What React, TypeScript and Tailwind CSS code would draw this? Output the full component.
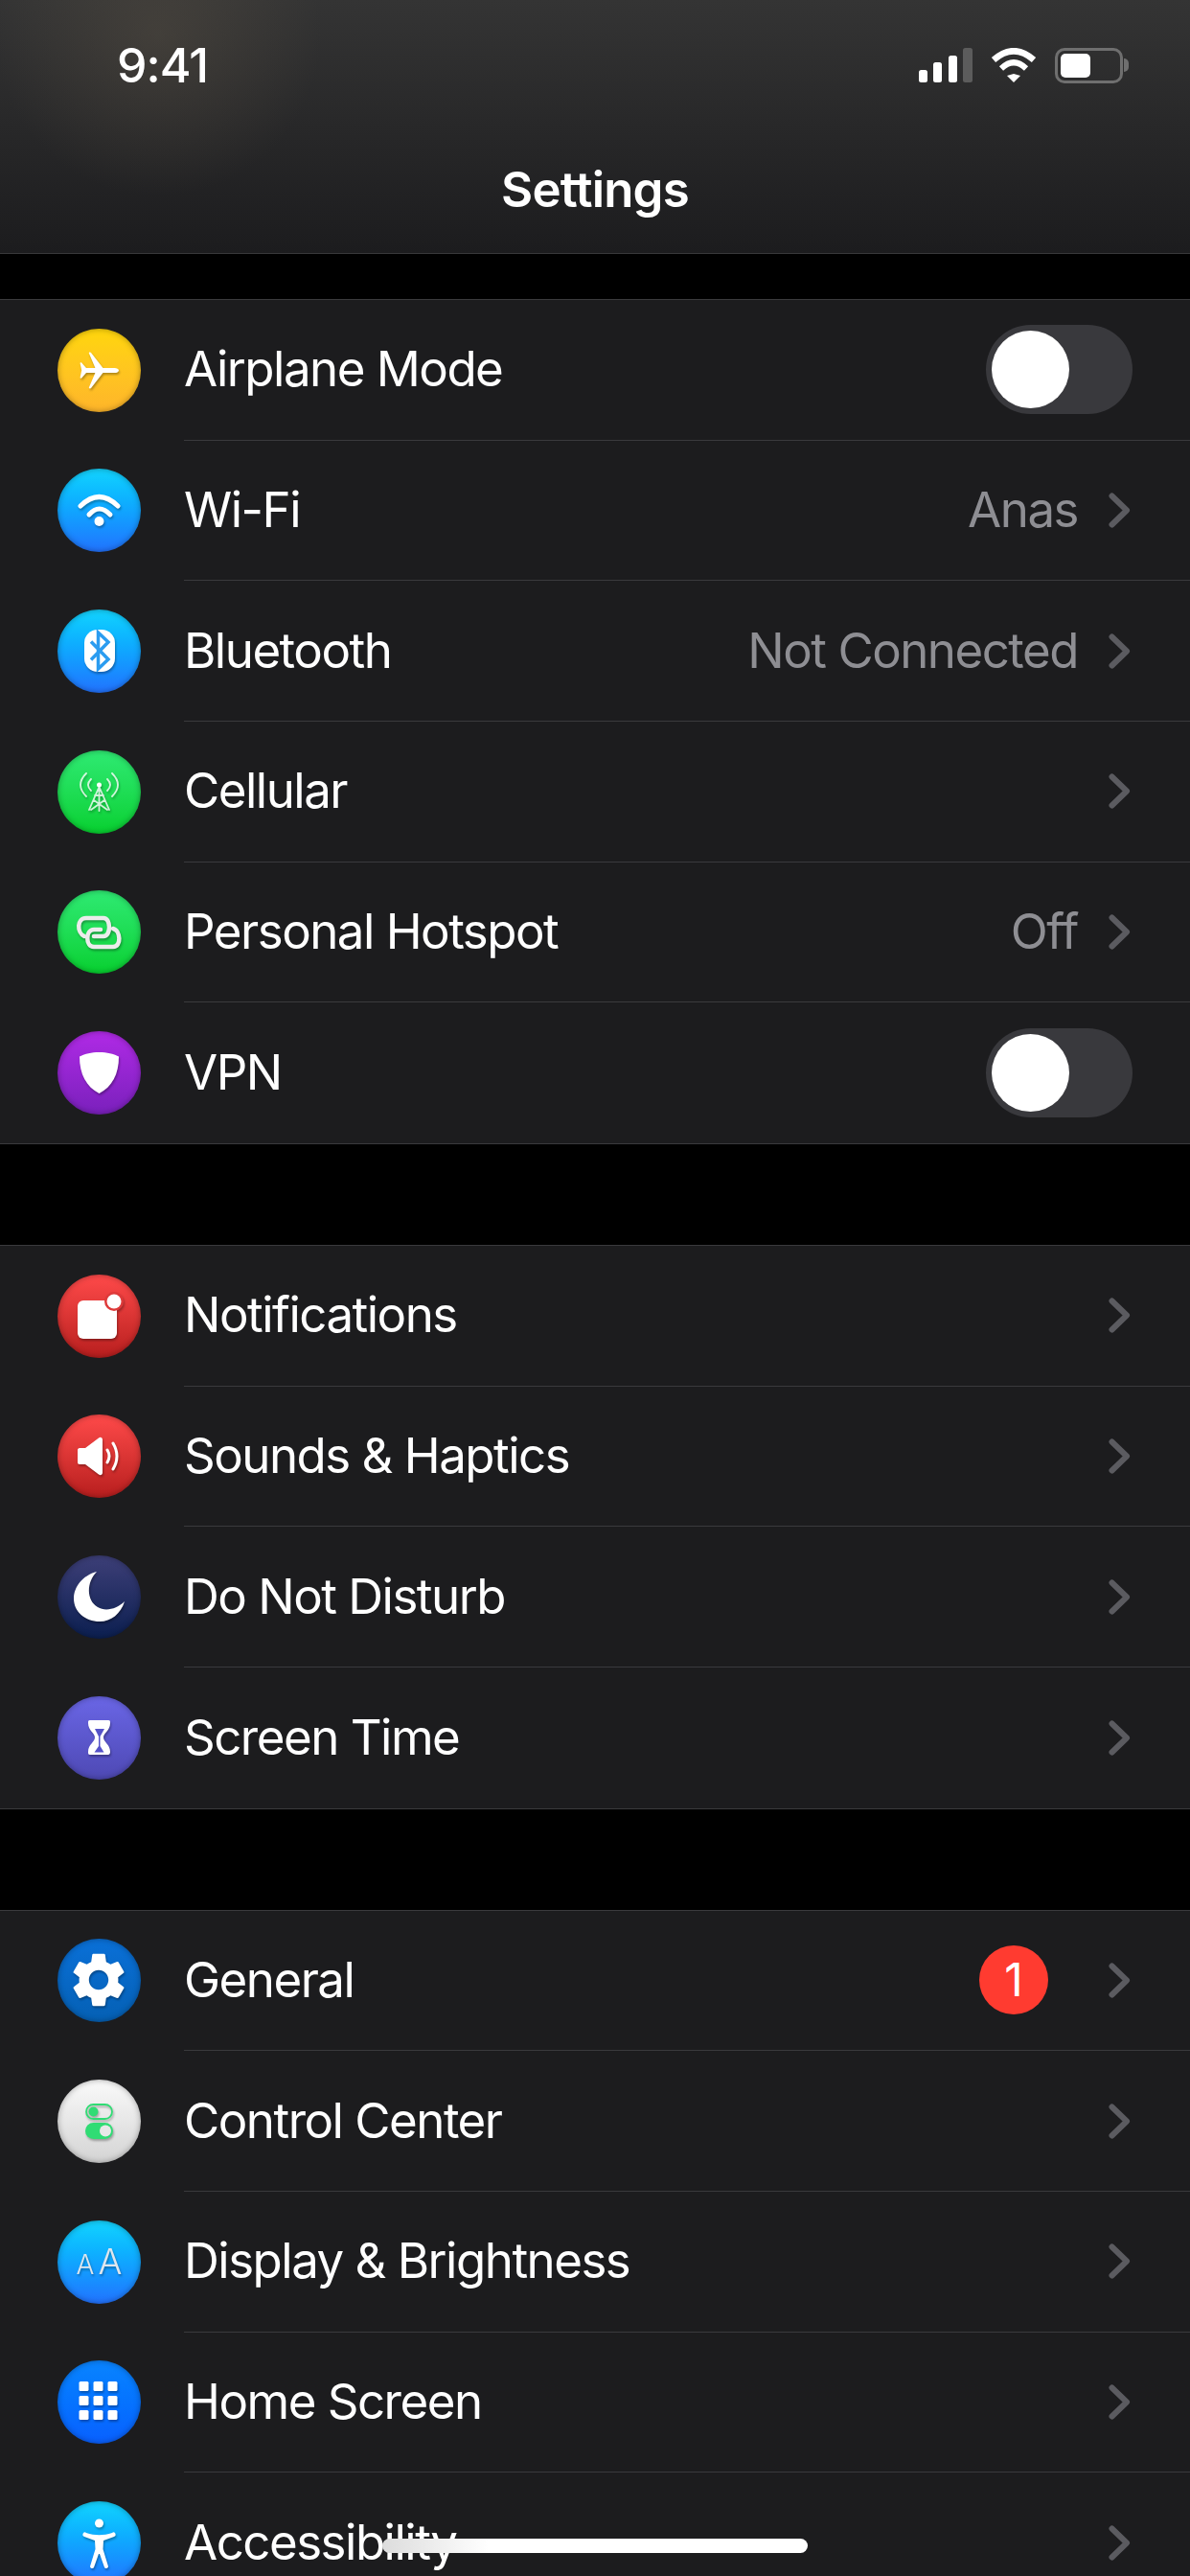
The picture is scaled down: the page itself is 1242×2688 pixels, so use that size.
import React from 'react';
import { MdSettings } from 'react-icons/md';

const glyph = 'drop-shadow-[1px_2px_1px_rgba(0,0,0,0.3)]';

function Svg({ children }: { children: React.ReactNode }) {
  return (
    <svg viewBox="0 0 87 87" className={`absolute inset-0 w-full h-full ${glyph}`}>
      {children}
    </svg>
  );
}

const AirplaneIcon = () => (
  <Svg>
    <path fill="#fff" d="M64 43.5c0-1.6-2.2-2.6-4.5-2.6H47.5L35.2 25.2c-.6-.8-2.6-.8-2.4.2l6.600 15.500H30l-4.600-5.200c-.6-.6-1.800-.6-1.800.2l1.600 7.600-1.600 7.600c0 .8 1.200.8 1.800.2l4.600-5.200h9.400l-6.600 15.500c-.2 1 1.800 1 2.400.2l12.300-15.700h12c2.300 0 4.500-1 4.500-2.600z" />
  </Svg>
);

const WifiIcon = () => (
  <Svg>
    <path fill="none" stroke="#fff" strokeWidth="5" strokeLinecap="round" d="M24 39Q43.5 20 63 39" />
    <path fill="none" stroke="#fff" strokeWidth="5" strokeLinecap="round" d="M33 48Q43.5 36 55 48" />
    <circle cx="43.5" cy="55" r="5" fill="#fff" />
  </Svg>
);

const BluetoothIcon = () => (
  <Svg>
    <rect x="28" y="21" width="32" height="44" rx="14" fill="#fff" />
    <path fill="none" stroke="#2a9cf0" strokeWidth="3.5" strokeLinejoin="miter" d="M35 33.500 53 52 42.500 62V24L53 34 35 52.500" />
  </Svg>
);

const CellularIcon = () => (
  <Svg>
    <g fill="none" stroke="#fff" strokeOpacity="0.8" strokeLinecap="round">
      <path strokeWidth="1.800" d="M30 24Q18 36 30 48" />
      <path strokeWidth="1.800" d="M57 24Q69 36 57 48" />
      <path strokeWidth="1.800" d="M35 30Q29 36 35 42" />
      <path strokeWidth="1.800" d="M52 30Q58 36 52 42" />
      <path strokeWidth="1.800" d="M43.500 38 33 62M43.500 38 54 62M43.500 38V63M38 52 52 62M49 52 35 62M39 47H48" />
    </g>
    <circle cx="43.500" cy="36" r="2.500" fill="#fff" />
  </Svg>
);

const HotspotIcon = () => (
  <Svg>
    <g fill="none" stroke="#ececec" strokeWidth="4.500" strokeLinecap="round">
      <path d="M28 48C20 44 20 29 30 29H48C56 29 56 48 48 48H38" />
      <path d="M58 40C66 42 67 59 58 59H38C29 59 29 41 38 41H45" />
    </g>
  </Svg>
);

const VpnIcon = () => (
  <Svg>
    <path fill="#fff" d="M43.500 22C52 22 58 23.500 64 26.500 64 45 57 58 43.500 65 30 58 23 45 23 26.500 29 23.500 35 22 43.500 22Z" />
  </Svg>
);

const NotificationsIcon = () => (
  <Svg>
    <rect x="21" y="27" width="41" height="40" rx="6" fill="#fff" />
    <circle cx="59" cy="28" r="10" fill="#de3a3a" />
    <circle cx="59" cy="28" r="7.500" fill="#fff" />
  </Svg>
);

const SoundsIcon = () => (
  <Svg>
    <path fill="#fff" d="M21 37c0-1 .8-2 2-2h6L43 24.500c1.800-1.500 4-.5 4 2v34c0 2.500-2.200 3.500-4 2L29 52h-6c-1.200 0-2-1-2-2z" />
    <g fill="none" stroke="#fff" strokeWidth="3" strokeLinecap="round">
      <path d="M52 37Q56 43.500 52 50" />
      <path d="M58 30Q66 43.500 58 57" />
    </g>
  </Svg>
);

const MoonIcon = () => (
  <Svg>
    <path fill="#fff" d="M41 17C26 21 17 33 17 45 17 59 29 69 44 69 56 69 66 61 70 48 62 56 50 59 42 54 30 47 30 28 41 17Z" />
  </Svg>
);

const HourglassIcon = () => (
  <Svg>
    <path fill="#fff" d="M34 25H53C55 25 55 26 55 28 55 36 48 38 48 43 48 48 55 50 55 58 55 60 54 61 53 61H34C32 61 32 60 32 58 32 50 39 48 39 43 39 38 32 36 32 28 32 26 32 25 34 25Z" />
    <path fill="#5552c8" d="M39 34H49L44.500 42V52L48.500 58.500H38.500L43 52V42Z" />
  </Svg>
);

const GeneralIcon = () => (
  <MdSettings className={`absolute top-[9px] left-[9px] text-white ${glyph}`} size={68} />
);

const ControlIcon = () => (
  <Svg>
    <rect x="30" y="26" width="27" height="15" rx="7.500" fill="none" stroke="#30dc74" strokeWidth="1.800" />
    <circle cx="37.500" cy="33.500" r="5" fill="#30dc74" />
    <rect x="29" y="45" width="29" height="17" rx="8.500" fill="#30dc74" />
    <circle cx="50" cy="53.500" r="6" fill="#e8e8e8" />
  </Svg>
);

const DisplayIcon = () => (
  <div className={`absolute inset-0 flex items-baseline justify-center pt-[24px] gap-[4px] font-light text-[#dfe6ee] ${glyph}`}>
    <span className="text-[28px] leading-[38px]">A</span>
    <span className="text-[37px] leading-[38px]">A</span>
  </div>
);

const HomeIcon = () => (
  <Svg>
    {[22, 37, 52].map((y) =>
      [22, 37, 52].map((x) => (
        <rect key={`${x}-${y}`} x={x + 0.5} y={y} width="10" height="10" rx="1.500" fill="#fff" />
      ))
    )}
  </Svg>
);

const AccessibilityIcon = () => (
  <Svg>
    <circle cx="43.500" cy="23" r="4.500" fill="#fff" />
    <path fill="#fff" d="M27 33C26 35 26 36 28 37L39 41 39.500 50 34 68C34 70 37 71 38 69L43 55 44 55 49 69C50 71 53 70 53 68L47.500 50 48 41 59 37C61 36 61 35 60 33 59 32 58 32 57 33 48 36 39 36 30 33 29 32 28 32 27 33Z" />
  </Svg>
);

const tones: Record<string, string> = {
  yellow: 'bg-gradient-to-b from-[#ffd60a] to-[#feb52a]',
  sky: 'bg-gradient-to-b from-[#14d4fe] to-[#2272fe]',
  green: 'bg-gradient-to-b from-[#2eea72] to-[#06d02e]',
  purple: 'bg-gradient-to-b from-[#b02ae6] to-[#7a20bc]',
  red: 'bg-gradient-to-b from-[#ff4a4a] to-[#b81e1e]',
  navy: 'bg-gradient-to-b from-[#3d3f78] to-[#0b1f50]',
  indigo: 'bg-gradient-to-b from-[#6a66e6] to-[#4e49b4]',
  steel: 'bg-gradient-to-b from-[#0a70d8] to-[#0560b4]',
  white: 'bg-gradient-to-b from-[#fafafa] to-[#d4d4d4]',
  azure: 'bg-gradient-to-b from-[#0a84ff] to-[#0a60ff]',
};

type Row = {
  label: string;
  tone: string;
  icon: React.ReactNode;
  value?: string;
  toggle?: boolean;
  badge?: string;
};

const groups: Row[][] = [
  [
    { label: 'Airplane Mode', tone: 'yellow', icon: <AirplaneIcon />, toggle: true },
    { label: 'Wi-Fi', tone: 'sky', icon: <WifiIcon />, value: 'Anas' },
    { label: 'Bluetooth', tone: 'sky', icon: <BluetoothIcon />, value: 'Not Connected' },
    { label: 'Cellular', tone: 'green', icon: <CellularIcon /> },
    { label: 'Personal Hotspot', tone: 'green', icon: <HotspotIcon />, value: 'Off' },
    { label: 'VPN', tone: 'purple', icon: <VpnIcon />, toggle: true },
  ],
  [
    { label: 'Notifications', tone: 'red', icon: <NotificationsIcon /> },
    { label: 'Sounds & Haptics', tone: 'red', icon: <SoundsIcon /> },
    { label: 'Do Not Disturb', tone: 'navy', icon: <MoonIcon /> },
    { label: 'Screen Time', tone: 'indigo', icon: <HourglassIcon /> },
  ],
  [
    { label: 'General', tone: 'steel', icon: <GeneralIcon />, badge: '1' },
    { label: 'Control Center', tone: 'white', icon: <ControlIcon /> },
    { label: 'Display & Brightness', tone: 'sky', icon: <DisplayIcon /> },
    { label: 'Home Screen', tone: 'azure', icon: <HomeIcon /> },
    { label: 'Accessibility', tone: 'sky', icon: <AccessibilityIcon /> },
  ],
];

function Chevron() {
  return (
    <svg viewBox="0 0 23 37" className="w-[23px] h-[37px] shrink-0">
      <path d="M3.500 3.500 19 18.500 3.500 33.500" fill="none" stroke="#5b5b60" strokeWidth="6" strokeLinecap="round" strokeLinejoin="round" />
    </svg>
  );
}

function Toggle() {
  return (
    <div className="w-[153px] h-[93px] rounded-full bg-[#39393d] p-[6px] mr-[-2px]">
      <div className="w-[81px] h-[81px] rounded-full bg-white" />
    </div>
  );
}

function SettingsRow({ row, last }: { row: Row; last: boolean }) {
  return (
    <div className="flex items-center h-[146.67px] pl-[60px]">
      <div className={`relative w-[87px] h-[87px] rounded-full shrink-0 shadow-[inset_0_0_6px_rgba(0,0,0,0.35)] ${tones[row.tone]}`}>
        {row.icon}
      </div>
      <div className={`flex items-center flex-1 h-full ml-[45px] pr-[62px] ${last ? '' : 'border-b border-[#3a3a3d]'}`}>
        <span className="flex-1 pb-[2px] text-[51px] leading-none tracking-[-1.5px] text-white whitespace-nowrap">{row.label}</span>
        {row.value && <span className="pb-[2px] text-[51px] leading-none tracking-[-1.5px] text-[#8e8e93] mr-[32px]">{row.value}</span>}
        {row.badge && (
          <span className="w-[72px] h-[72px] rounded-full bg-[#ff3b30] text-white text-[48px] leading-none flex items-center justify-center mr-[63px]">
            {row.badge}
          </span>
        )}
        {row.toggle ? <Toggle /> : <Chevron />}
      </div>
    </div>
  );
}

export default function App() {
  return (
    <div className="relative h-[2688px] overflow-hidden bg-black font-['Inter',sans-serif]">
      {/* Nav bar */}
      <header className="relative h-[265px] border-b border-[#38383a] bg-[radial-gradient(circle_at_165px_35px,rgba(90,82,70,0.42),transparent_170px),linear-gradient(to_bottom,#343434,#1c1c1e)]">
        <div className="flex items-center justify-between pl-[122px] pr-[64px] pt-[44px]">
          <span className="text-[50px] leading-[48px] font-medium tracking-[-1px] text-white">9:41</span>
          <div className="flex items-center gap-[19px]">
            <svg viewBox="0 0 56 36" className="w-[56px] h-[36px]">
              <rect x="0" y="23" width="9" height="13" rx="2.500" fill="#fff" />
              <rect x="15" y="15" width="9" height="21" rx="2.500" fill="#fff" />
              <rect x="31" y="8" width="9" height="28" rx="2.500" fill="#fff" />
              <rect x="46" y="0" width="10" height="36" rx="2.500" fill="#5c5c5c" />
            </svg>
            <svg viewBox="0 0 48 36" className="w-[48px] h-[36px]">
              <path d="M24 27 L31 29 24 36 17 29Z" fill="#fff" />
              <path d="M11 21.500Q24 9 37 21.500" fill="none" stroke="#fff" strokeWidth="6" strokeLinecap="butt" />
              <path d="M3 12.500Q24 -6 45 12.500" fill="none" stroke="#fff" strokeWidth="6.500" strokeLinecap="butt" />
            </svg>
            <div className="flex items-center gap-[1px]">
              <div className="w-[71px] h-[37px] rounded-[10px] border-[3px] border-[#6f6f6f] p-[3px]">
                <div className="w-[31px] h-full rounded-[5px] bg-white" />
              </div>
              <div className="w-[5px] h-[14px] rounded-r-full bg-[#6f6f6f]" />
            </div>
          </div>
        </div>
        <h1 className="mt-[80px] text-center text-[51px] leading-none font-semibold tracking-[-0.8px] text-white">Settings</h1>
      </header>

      {/* Settings groups */}
      <div className="flex flex-col gap-[105px] pt-[47px]">
        {groups.map((rows, i) => (
          <section key={i} className="bg-[#1c1c1e] border-y border-[#3a3a3d]">
            {rows.map((row, j) => (
              <SettingsRow key={row.label} row={row} last={j === rows.length - 1} />
            ))}
          </section>
        ))}
      </div>

      {/* Home indicator */}
      <div className="absolute top-[2649px] left-[399px] w-[444px] h-[15px] rounded-full bg-[linear-gradient(to_right,#dcdcdc,#ffffff_25%)]" />
    </div>
  );
}
